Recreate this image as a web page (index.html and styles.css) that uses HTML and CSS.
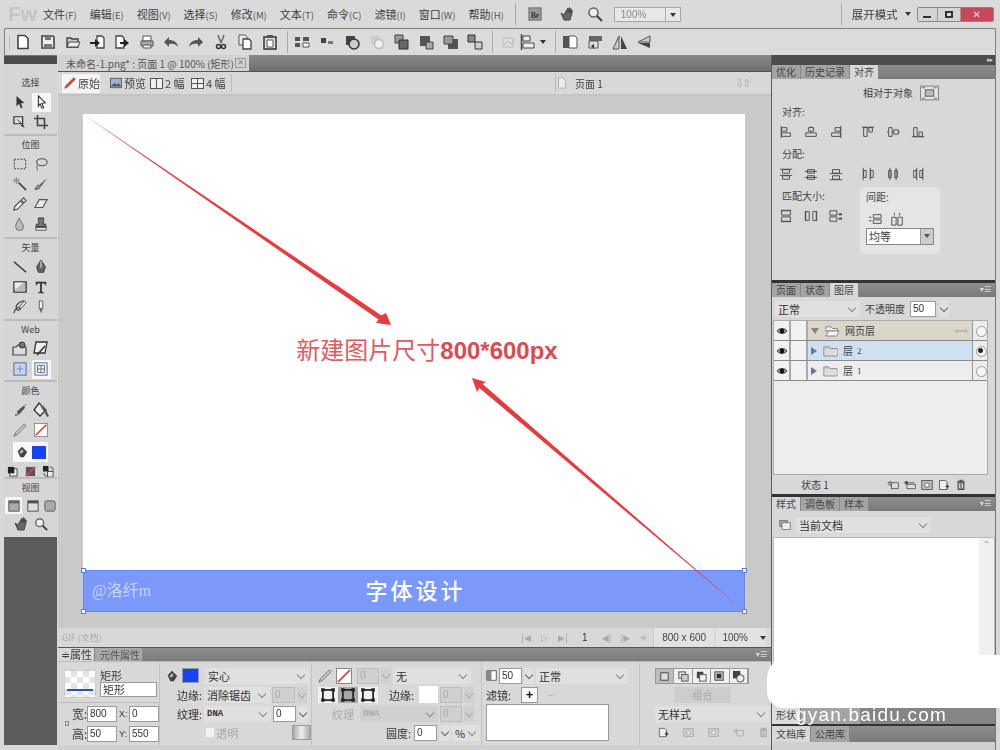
FILE: index.html
```html
<!DOCTYPE html>
<html lang="zh">
<head>
<meta charset="utf-8">
<title>Fireworks</title>
<link rel="stylesheet" href="styles.css">
</head>
<body>
<svg class="defs" width="0" height="0">
<defs>
<symbol id="new" viewBox="0 0 16 16"><path d="M3 1.500h7l3 3v10H3z" fill="#fff" stroke="#444" stroke-width="1.600"/></symbol>
<symbol id="save" viewBox="0 0 16 16"><path d="M2 2h11l1 1v11H2z" fill="#eee" stroke="#444" stroke-width="1.600"/><path d="M5 2h6v4H5zM4 10h8v4H4z" fill="#777"/></symbol>
<symbol id="open" viewBox="0 0 16 16"><path d="M2 4h4l1 1h6v8H2z" fill="#ccc" stroke="#444" stroke-width="1.400"/><path d="M2 13l2-5h11l-2 5z" fill="#eee" stroke="#444"/></symbol>
<symbol id="imp" viewBox="0 0 16 16"><path d="M8 2h5l2 2v10H8z" fill="#fff" stroke="#444" stroke-width="1.300"/><path d="M1 8h5V5l5 4-5 4v-3H1z" fill="#222"/></symbol>
<symbol id="exp" viewBox="0 0 16 16"><path d="M2 2h6l2 2v10H2z" fill="#fff" stroke="#444" stroke-width="1.300"/><path d="M6 8h4V5l5 4-5 4v-3H6z" fill="#222"/></symbol>
<symbol id="print" viewBox="0 0 16 16"><path d="M4 2h8v5H4z" fill="#fff" stroke="#555"/><path d="M2 7h12v5H2z" fill="#aaa" stroke="#555"/><path d="M4 11h8v3H4z" fill="#eee" stroke="#555"/></symbol>
<symbol id="undo" viewBox="0 0 16 16"><path d="M1 8l5-5v3c5 0 8 2 9 7-2-3-5-4-9-3v3z" fill="#555"/></symbol>
<symbol id="redo" viewBox="0 0 16 16"><path d="M15 8l-5-5v3C5 6 2 8 1 13c2-3 5-4 9-3v3z" fill="#555"/></symbol>
<symbol id="cut" viewBox="0 0 16 16"><path d="M5 1l3 8M11 1L8 9" stroke="#666" stroke-width="1.500" fill="none"/><circle cx="5.500" cy="12.500" r="2" fill="none" stroke="#333" stroke-width="1.500"/><circle cx="10.500" cy="12.500" r="2" fill="none" stroke="#333" stroke-width="1.500"/></symbol>
<symbol id="copy" viewBox="0 0 16 16"><path d="M2 1h6l2 2v8H2z" fill="#eee" stroke="#555"/><path d="M6 5h6l2 2v8H6z" fill="#fff" stroke="#444" stroke-width="1.300"/></symbol>
<symbol id="paste" viewBox="0 0 16 16"><path d="M2 3h12v12H2z" fill="#ddd" stroke="#333" stroke-width="1.500"/><path d="M5 1h6v3H5z" fill="#555"/><path d="M5 6h6v7H5z" fill="#fff" stroke="#555"/></symbol>
<symbol id="g1" viewBox="0 0 16 16"><path d="M1 3h5v4H1zM9 3h6v4H9zM1 9h5v4H1z" fill="#555"/><path d="M9 9h6v4H9z" fill="#fff" stroke="#555"/></symbol>
<symbol id="g2" viewBox="0 0 16 16"><path d="M2 4h5v5H2z" fill="#444"/><path d="M9 7h5v3H9z" fill="#777"/></symbol>
<symbol id="g3" viewBox="0 0 16 16"><path d="M2 2h9v9H2z" fill="#444"/><circle cx="10" cy="10" r="5" fill="#ccc" stroke="#333" stroke-width="1.500"/></symbol>
<symbol id="g4" viewBox="0 0 16 16"><path d="M2 2h8v8H2z" fill="#ccc"/><circle cx="10" cy="10" r="4.500" fill="#eee" stroke="#bbb" stroke-width="1.500"/></symbol>
<symbol id="g5" viewBox="0 0 16 16"><path d="M2 1h8v8H2z" fill="#999" stroke="#444"/><path d="M6 6h9v9H6z" fill="#666" stroke="#333"/></symbol>
<symbol id="g6" viewBox="0 0 16 16"><path d="M2 2h10v10H2z" fill="#555"/><path d="M8 8h7v7H8z" fill="#aaa" stroke="#444"/></symbol>
<symbol id="g7" viewBox="0 0 16 16"><path d="M5 5h10v10H5z" fill="#555"/><path d="M1 2h9v8H1z" fill="#999" stroke="#444"/></symbol>
<symbol id="g8" viewBox="0 0 16 16"><path d="M1 1h7v7H1z" fill="#888" stroke="#333"/><path d="M8 8h7v7H8z" fill="#ccc" stroke="#333"/></symbol>
<symbol id="g9" viewBox="0 0 16 16"><path d="M2 4h10v9H2z" fill="#ddd" stroke="#bbb"/><path d="M3 11l4-4 3 3 4-5" fill="none" stroke="#bbb"/></symbol>
<symbol id="alg" viewBox="0 0 16 16"><path d="M1.500 0v16" stroke="#444" stroke-width="1.500"/><path d="M3 2h7v5H3zM3 9h11v5H3z" fill="#eee" stroke="#444"/></symbol>
<symbol id="m1" viewBox="0 0 16 16"><path d="M1 2h6v12H1z" fill="#555"/><path d="M7 2h6l2 2v10H7z" fill="#fff" stroke="#555"/></symbol>
<symbol id="m2" viewBox="0 0 16 16"><path d="M2 2h13v5H2z" fill="#666"/><path d="M2 7h9v7H2z" fill="#ddd" stroke="#555"/><path d="M7 15l-3-3 3-2z" fill="#333"/></symbol>
<symbol id="m3" viewBox="0 0 16 16"><path d="M7 2v13H1z" fill="#ccc" stroke="#555"/><path d="M9 2v13h6z" fill="#444"/></symbol>
<symbol id="m4" viewBox="0 0 16 16"><path d="M14 2v6L2 8z" fill="#ccc" stroke="#555"/><path d="M14 14V9L2 9z" fill="#444"/></symbol>
<symbol id="br" viewBox="0 0 16 16"><rect x="1" y="1" width="14" height="14" fill="#999" stroke="#666"/><text x="3" y="12" font-size="9" font-weight="700" fill="#333" font-family="Liberation Serif">Br</text></symbol>
<symbol id="hand" viewBox="0 0 16 16"><path d="M3 7l3 7h6l2-7V4l-1 3V2.500l-1.500 4V1.500l-1.500 5V2L7 7 6 9z" fill="#666" stroke="#444"/></symbol>
<symbol id="mag" viewBox="0 0 16 16"><circle cx="6.500" cy="6.500" r="4.500" fill="#eee" stroke="#666" stroke-width="1.600"/><path d="M10 10l5 5" stroke="#444" stroke-width="2.200"/></symbol>
<symbol id="arrow" viewBox="0 0 16 16"><path d="M4 1l9 8-4 .5 2 5-2 .5-2-5-3 3z" fill="#333"/></symbol>
<symbol id="sub" viewBox="0 0 16 16"><path d="M5 1l8 8-4 .5 2 5-2 .5-2-5-2 3z" fill="#fff" stroke="#333" stroke-width="1.200"/></symbol>
<symbol id="scale" viewBox="0 0 16 16"><path d="M1 2h10v8H1z" fill="#ddd" stroke="#333" stroke-width="1.400"/><path d="M5 5l7 7h-3l4 2" fill="#444" stroke="#333"/></symbol>
<symbol id="crop" viewBox="0 0 16 16"><path d="M4 0v12h12M0 4h12v12" fill="none" stroke="#444" stroke-width="1.800"/></symbol>
<symbol id="marq" viewBox="0 0 16 16"><rect x="1.500" y="2.500" width="13" height="11" fill="none" stroke="#444" stroke-width="1.200" stroke-dasharray="2 1.500"/></symbol>
<symbol id="lasso" viewBox="0 0 16 16"><ellipse cx="9" cy="6" rx="6" ry="4" fill="none" stroke="#555" stroke-width="1.300"/><path d="M4 9c-2 2 0 4 0 6" fill="none" stroke="#555"/></symbol>
<symbol id="wand" viewBox="0 0 16 16"><path d="M6 6l9 9" stroke="#444" stroke-width="2"/><path d="M4 0v8M0 4h8M1 1l6 6M7 1L1 7" stroke="#888"/></symbol>
<symbol id="brush" viewBox="0 0 16 16"><path d="M15 1L6 9l2 2z" fill="#666"/><path d="M5 9c-2 1-2 3-4 5 4 0 6-1 6-3z" fill="#999" stroke="#444"/></symbol>
<symbol id="pencil" viewBox="0 0 16 16"><path d="M12 1l3 3L5 14l-4 1 1-4z" fill="#eee" stroke="#444" stroke-width="1.200"/><path d="M10 3l3 3-2 2-3-3z" fill="#666"/></symbol>
<symbol id="eraser" viewBox="0 0 16 16"><path d="M6 3h9l-5 9H1z" fill="#e8e8e8" stroke="#555" stroke-width="1.200"/></symbol>
<symbol id="drop" viewBox="0 0 16 16"><path d="M7 1C5 6 3 8 3 11a4.500 4.500 0 0 0 9 0c0-3-3-5-5-10z" fill="#bbb" stroke="#666"/></symbol>
<symbol id="stamp" viewBox="0 0 16 16"><path d="M5 1h6v4l-1 3h3l1 3H2l1-3h3L5 5z" fill="#777" stroke="#333"/><path d="M2 12h12v3H2z" fill="#eee" stroke="#444"/></symbol>
<symbol id="line" viewBox="0 0 16 16"><path d="M1 2l14 12" stroke="#333" stroke-width="1.600"/></symbol>
<symbol id="pen" viewBox="0 0 16 16"><path d="M8 0l5 8-2 6H5L3 8z" fill="#666" stroke="#333"/><path d="M8 1v8" stroke="#fff"/></symbol>
<symbol id="rect" viewBox="0 0 16 16"><path d="M1 2h14v12H1z" fill="#bbb" stroke="#333" stroke-width="1.400"/><path d="M2 3h10l-10 8z" fill="#eee"/></symbol>
<symbol id="tee" viewBox="0 0 16 16"><path d="M2 2h12v4h-1l-1-2H9v9l2 1v1H5v-1l2-1V4H4L3 6H2z" fill="#333"/></symbol>
<symbol id="free" viewBox="0 0 16 16"><path d="M13 1c-5 0-11 5-9 9 1 3 6 1 4-1-2-2-6 1-7 6" fill="none" stroke="#444" stroke-width="1.300"/><path d="M15 3l-5 6-3 1 1-3 5-6z" fill="#eee" stroke="#444"/></symbol>
<symbol id="knife" viewBox="0 0 16 16"><path d="M6 1h4v9H6z" fill="#eee" stroke="#555"/><path d="M6 10h4l-2 5z" fill="#666"/></symbol>
<symbol id="hot" viewBox="0 0 16 16"><path d="M1 6h3l2-2h4l1 2h3v8H1z" fill="#ddd" stroke="#444" stroke-width="1.200"/><circle cx="10" cy="4" r="3" fill="#777" stroke="#333"/></symbol>
<symbol id="slice" viewBox="0 0 16 16"><path d="M3 1h11l-2 11H1z" fill="#eee" stroke="#333" stroke-width="1.300"/><path d="M12 5l-8 9" stroke="#333" stroke-width="1.500"/></symbol>
<symbol id="hide" viewBox="0 0 16 16"><rect x="1" y="1" width="14" height="14" fill="#c8d4ea" stroke="#6f86b5" stroke-width="1.500"/><path d="M8 4v8M4 8h8" stroke="#6f86b5"/></symbol>
<symbol id="show" viewBox="0 0 16 16"><rect x="1" y="1" width="14" height="14" fill="#f2f4fa" stroke="#7a8fc0" stroke-width="1.500"/><path d="M4 4h8v8H4zM8 4v8M4 8h8" fill="none" stroke="#666"/></symbol>
<symbol id="eye" viewBox="0 0 16 16"><path d="M14 1l1 1-2 2 1 1-6 7-3 2-3 1 1-3 2-3 7-6 1 1z" fill="#555"/><path d="M4 10l-2 4 4-2z" fill="#ccc"/></symbol>
<symbol id="bucket" viewBox="0 0 16 16"><path d="M6 1l7 7-6 6-6-6z" fill="#eee" stroke="#333" stroke-width="1.300"/><path d="M7 4l6 4 3 6-2 1-2-4z" fill="#555"/></symbol>
<symbol id="strk" viewBox="0 0 16 16"><path d="M13 1l2 2L5 13l-4 2 2-4z" fill="#ccc" stroke="#666"/></symbol>
<symbol id="redp" viewBox="0 0 16 16"><path d="M13 1l2 2L5 13l-4 2 2-4z" fill="#d8414a" stroke="#a83038"/></symbol>
<symbol id="prev" viewBox="0 0 14 12"><rect x=".5" y=".5" width="13" height="11" fill="#9fb2cc" stroke="#555"/><path d="M1 10l4-4 3 2 2-2 3 4z" fill="#556"/></symbol>
<symbol id="fillp" viewBox="0 0 16 16"><path d="M3 7l5-5 6 6-4 6H6z" fill="#444"/><path d="M5 8l3-3 2 2-3 3z" fill="#bbb"/></symbol>
<symbol id="noneswatch" viewBox="0 0 16 16"><rect x=".5" y=".5" width="15" height="15" fill="#fff" stroke="#888"/><path d="M2 14L14 2" stroke="#d83030" stroke-width="1.600"/></symbol>
<symbol id="defc" viewBox="0 0 12 12"><rect x="3" y="3" width="8" height="8" fill="#eee" stroke="#444"/><rect x="1" y="1" width="7" height="7" fill="#222"/></symbol>
<symbol id="nocol" viewBox="0 0 12 12"><rect x="1" y="1" width="10" height="10" fill="#555"/><path d="M1 11L11 1" stroke="#e04040" stroke-width="2"/></symbol>
<symbol id="swp" viewBox="0 0 12 12"><rect x="0" y="0" width="6" height="6" fill="#222"/><rect x="5" y="6" width="6" height="6" fill="#eee" stroke="#444"/><path d="M8 1c3 0 3 3 3 4M1 8c0 2 1 3 3 3" fill="none" stroke="#333"/></symbol>
<symbol id="v1" viewBox="0 0 14 14"><rect x="1" y="1" width="12" height="12" fill="#aaa" stroke="#444"/><rect x="1" y="1" width="12" height="3" fill="#666"/></symbol>
<symbol id="v2" viewBox="0 0 14 14"><rect x="1" y="1" width="12" height="12" fill="#ddd" stroke="#444"/><rect x="1" y="1" width="12" height="3" fill="#555"/></symbol>
<symbol id="v3" viewBox="0 0 14 14"><rect x="1" y="1" width="12" height="12" rx="2" fill="#aaa" stroke="#555"/></symbol>
<symbol id="a1" viewBox="0 0 16 16"><path d="M2.500 1v14" stroke="#444"/><path d="M3 3h6v4H3zM3 9h10v4H3z" fill="none" stroke="#444"/></symbol>
<symbol id="a2" viewBox="0 0 16 16"><path d="M5 3h6v4H5zM2 9h12v4H2z" fill="none" stroke="#444"/><path d="M8 1v2M8 7v2" stroke="#444"/></symbol>
<symbol id="a3" viewBox="0 0 16 16"><path d="M13.500 1v14" stroke="#444"/><path d="M7 3h6v4H7zM3 9h10v4H3z" fill="none" stroke="#444"/></symbol>
<symbol id="a4" viewBox="0 0 16 16"><path d="M1 2.500h14" stroke="#444"/><path d="M3 3h4v10H3zM9 3h4v5H9z" fill="none" stroke="#444"/></symbol>
<symbol id="a5" viewBox="0 0 16 16"><path d="M1 8h2M7 8h2M14 8h2" stroke="#444"/><path d="M3 3h4v10H3zM9 5.500h5v5H9z" fill="none" stroke="#444"/></symbol>
<symbol id="a6" viewBox="0 0 16 16"><path d="M1 13.500h14" stroke="#444"/><path d="M3 3h4v10H3zM9 8h4v5H9z" fill="none" stroke="#444"/></symbol>
<symbol id="d1" viewBox="0 0 16 16"><path d="M1 2.500h14M1 9.500h14" stroke="#444"/><path d="M4 3h8v4H4zM4 10h8v4H4z" fill="none" stroke="#444"/></symbol>
<symbol id="d2" viewBox="0 0 16 16"><path d="M1 5h14M1 12h14" stroke="#444"/><path d="M4 3h8v4H4zM4 10h8v4H4z" fill="none" stroke="#444"/></symbol>
<symbol id="d3" viewBox="0 0 16 16"><path d="M1 7.500h14M1 14.500h14" stroke="#444"/><path d="M4 3h8v4H4zM4 10h8v4H4z" fill="none" stroke="#444"/></symbol>
<symbol id="d4" viewBox="0 0 16 16"><path d="M2.500 1v14M10.500 1v14" stroke="#444"/><path d="M3 4h3v8H3zM11 4h3v8h-3z" fill="none" stroke="#444"/></symbol>
<symbol id="d5" viewBox="0 0 16 16"><path d="M4.500 1v14M11.500 1v14" stroke="#444"/><path d="M3 4h3v8H3zM10 4h3v8h-3z" fill="none" stroke="#444"/></symbol>
<symbol id="d6" viewBox="0 0 16 16"><path d="M6.500 1v14M13.500 1v14" stroke="#444"/><path d="M3 4h3v8H3zM10 4h3v8h-3z" fill="none" stroke="#444"/></symbol>
<symbol id="s1" viewBox="0 0 16 16"><path d="M2 1.500h12M2 14.500h12" stroke="#444"/><path d="M3 2h10v5H3zM3 9h10v5H3z" fill="none" stroke="#444"/></symbol>
<symbol id="s2" viewBox="0 0 16 16"><path d="M1.500 2v12M14.500 2v12" stroke="#444"/><path d="M2 3h4v10H2zM10 3h4v10h-4z" fill="none" stroke="#444"/></symbol>
<symbol id="s3" viewBox="0 0 16 16"><path d="M1 2h8v5H1zM1 9h8v5H1z" fill="none" stroke="#444"/><path d="M11 5h4v2h-4zM11 10h4v2h-4z" fill="#444"/></symbol>
<symbol id="sp1" viewBox="0 0 16 16"><path d="M1 6h3M1 10h3" stroke="#444"/><path d="M6 3h9v4H6zM6 9h9v4H6z" fill="none" stroke="#444"/></symbol>
<symbol id="sp2" viewBox="0 0 16 16"><path d="M5 1v3M11 1v3" stroke="#444"/><path d="M2 6h5v9H2zM9 6h5v9H9z" fill="none" stroke="#444"/></symbol>
<symbol id="rel" viewBox="0 0 18 14"><rect x=".5" y=".5" width="17" height="13" fill="#e4e4e4" stroke="#888"/><rect x="5" y="4" width="8" height="6" fill="#bbb" stroke="#666"/><path d="M2 2h3M13 2h3M2 12h3M13 12h3" stroke="#777"/></symbol>
<symbol id="page" viewBox="0 0 12 14"><path d="M2 1h5l3 3v9H2z" fill="#eee" stroke="#aaa"/></symbol>
<symbol id="folder" viewBox="0 0 18 14"><path d="M1 2h6l2 2h8v9H1z" fill="#ccc" stroke="#888"/><path d="M2 5h15v7H2z" fill="#ddd"/></symbol>
<symbol id="folderopen" viewBox="0 0 18 14"><path d="M1 2h6l2 2h6v3H1z" fill="#eee" stroke="#777"/><path d="M1 13l3-6h13l-3 6z" fill="#f2f2f2" stroke="#777"/></symbol>
<symbol id="eyeball" viewBox="0 0 14 12"><path d="M1 6c3-4 9-4 12 0-3 4-9 4-12 0z" fill="#aaa" stroke="#222"/><circle cx="7" cy="6" r="2.800" fill="#111"/></symbol>
<symbol id="lay1" viewBox="0 0 16 14"><path d="M2 4h3V2L1 5l4 3V6h4" fill="none" stroke="#444"/><rect x="6" y="4" width="9" height="8" fill="#ddd" stroke="#444"/></symbol>
<symbol id="lay2" viewBox="0 0 16 14"><path d="M14 4H4" stroke="#444"/><rect x="1" y="2" width="4" height="4" fill="#444"/><rect x="4" y="6" width="11" height="6" fill="#ddd" stroke="#444"/></symbol>
<symbol id="lay3" viewBox="0 0 16 14"><rect x="1" y="1" width="14" height="12" fill="#bbb" stroke="#444"/><circle cx="8" cy="7" r="3" fill="#fff" stroke="#444"/></symbol>
<symbol id="lay4" viewBox="0 0 16 14"><path d="M2 1h8l2 2v10H2z" fill="#eee" stroke="#444"/><path d="M10 9h5M12.500 6v6" stroke="#333" stroke-width="1.500"/></symbol>
<symbol id="lay5" viewBox="0 0 16 14"><path d="M4 3h8v10H4zM3 2h10" fill="#888" stroke="#333"/><path d="M6 0h4v2H6z" fill="#555"/><path d="M6 5v6M10 5v6" stroke="#eee"/></symbol>
<symbol id="styledoc" viewBox="0 0 16 14"><rect x="1" y="1" width="10" height="8" fill="#aaa" stroke="#666"/><rect x="4" y="4" width="11" height="9" fill="#eee" stroke="#666"/></symbol>
<symbol id="thumb" viewBox="0 0 14 14"><rect x="1" y="1" width="12" height="12" fill="#fff" stroke="#444"/><rect x="1" y="1" width="6" height="12" fill="#888"/></symbol>
<symbol id="b1" viewBox="0 0 14 14"><rect x="3" y="3" width="8" height="8" fill="#ddd" stroke="#444"/></symbol>
<symbol id="b2" viewBox="0 0 14 14"><rect x="2" y="2" width="7" height="7" fill="#ddd" stroke="#555"/><rect x="5" y="5" width="7" height="7" fill="#ccc" stroke="#555"/></symbol>
<symbol id="b3" viewBox="0 0 14 14"><path d="M2 2h7v3H5v4H2z" fill="#444"/><rect x="5" y="5" width="7" height="7" fill="#eee" stroke="#555"/></symbol>
<symbol id="b4" viewBox="0 0 14 14"><rect x="2" y="2" width="9" height="9" fill="#ccc" stroke="#444"/><rect x="4" y="4" width="5" height="5" fill="#333"/></symbol>
<symbol id="b5" viewBox="0 0 14 14"><rect x="1" y="1" width="8" height="8" fill="#444"/><circle cx="9" cy="9" r="4" fill="#eee" stroke="#444"/></symbol>
<symbol id="sq3" viewBox="0 0 14 14"><rect x="2.500" y="2.500" width="9" height="9" fill="none" stroke="#222" stroke-width="1.500"/><path d="M1 1h3v3H1zM10 1h3v3h-3zM1 10h3v3H1zM10 10h3v3h-3z" fill="#222"/></symbol>
</defs>
</svg>

<div class="app">
  <header class="titlebar">
    <span class="logo">Fw</span>
    <nav class="menu">
      <span>文件<small>(F)</small></span><span>编辑<small>(E)</small></span><span>视图<small>(V)</small></span><span>选择<small>(S)</small></span><span>修改<small>(M)</small></span><span>文本<small>(T)</small></span><span>命令<small>(C)</small></span><span>滤镜<small>(I)</small></span><span>窗口<small>(W)</small></span><span>帮助<small>(H)</small></span>
    </nav>
    <i class="vsep sep-menu"></i>
    <svg class="ic14 br"><use href="#br"/></svg>
    <svg class="ic16 hand"><use href="#hand"/></svg>
    <svg class="ic16 mag"><use href="#mag"/></svg>
    <span class="zoomsel"><span>100%</span><b></b></span>
    <i class="vsep sep-mode"></i>
    <span class="mode">展开模式</span>
    <span class="tri"></span>
    <span class="winbtns"><span class="wb wmin"><i></i></span><span class="wb wmax"><i></i></span><span class="wb wclose">✕</span></span>
  </header>

  <div class="toolbar">
    <span class="grip"></span>
    <svg class="ic16"><use href="#new"/></svg><svg class="ic16"><use href="#save"/></svg><svg class="ic16"><use href="#open"/></svg><svg class="ic16"><use href="#imp"/></svg><svg class="ic16"><use href="#exp"/></svg><svg class="ic16"><use href="#print"/></svg><svg class="ic16"><use href="#undo"/></svg><svg class="ic16"><use href="#redo"/></svg><svg class="ic16"><use href="#cut"/></svg><svg class="ic16"><use href="#copy"/></svg><svg class="ic16"><use href="#paste"/></svg>
    <i class="tsep"></i>
    <svg class="ic16"><use href="#g1"/></svg><svg class="ic16"><use href="#g2"/></svg><svg class="ic16"><use href="#g3"/></svg><svg class="ic16"><use href="#g4"/></svg><svg class="ic16"><use href="#g5"/></svg><svg class="ic16"><use href="#g6"/></svg><svg class="ic16"><use href="#g7"/></svg><svg class="ic16"><use href="#g8"/></svg>
    <i class="tsep"></i>
    <svg class="ic16 g9"><use href="#g9"/></svg><svg class="ic16 tight"><use href="#alg"/></svg><span class="tri tri-small"></span>
    <i class="tsep"></i>
    <svg class="ic16"><use href="#m1"/></svg><svg class="ic16"><use href="#m2"/></svg><svg class="ic16"><use href="#m3"/></svg><svg class="ic16"><use href="#m4"/></svg>
  </div>

  <div class="workspace">
    <aside class="toolcol">
      <div class="darkstrip"></div>
      <div class="tools">
        <section class="tsec h1"><h4>选择</h4><div class="tgrid">
          <svg class="ic14"><use href="#arrow"/></svg><span class="tcell on"><svg class="ic14"><use href="#sub"/></svg></span>
          <svg class="ic14"><use href="#scale"/></svg><svg class="ic14"><use href="#crop"/></svg>
        </div></section>
        <section class="tsec h2"><h4>位图</h4><div class="tgrid">
          <svg class="ic14"><use href="#marq"/></svg><svg class="ic14"><use href="#lasso"/></svg>
          <svg class="ic14"><use href="#wand"/></svg><svg class="ic14"><use href="#brush"/></svg>
          <svg class="ic14"><use href="#pencil"/></svg><svg class="ic14"><use href="#eraser"/></svg>
          <svg class="ic14"><use href="#drop"/></svg><svg class="ic14"><use href="#stamp"/></svg>
        </div></section>
        <section class="tsec h3"><h4>矢量</h4><div class="tgrid">
          <svg class="ic14"><use href="#line"/></svg><svg class="ic14"><use href="#pen"/></svg>
          <svg class="ic14"><use href="#rect"/></svg><svg class="ic14"><use href="#tee"/></svg>
          <svg class="ic14"><use href="#free"/></svg><svg class="ic14"><use href="#knife"/></svg>
        </div></section>
        <section class="tsec h4"><h4>Web</h4><div class="tgrid">
          <svg class="ic16"><use href="#hot"/></svg><svg class="ic16"><use href="#slice"/></svg>
          <svg class="ic14"><use href="#hide"/></svg><span class="tcell on"><svg class="ic14"><use href="#show"/></svg></span>
        </div></section>
        <section class="tsec h5"><h4>颜色</h4><div class="tgrid">
          <svg class="ic14"><use href="#eye"/></svg><svg class="ic16"><use href="#bucket"/></svg>
          <svg class="ic14"><use href="#strk"/></svg><svg class="ic14"><use href="#noneswatch"/></svg>
        </div>
        <div class="fillrow"><svg class="ic14"><use href="#fillp"/></svg><span class="blue"></span></div>
        <div class="colrow"><svg class="ic10"><use href="#defc"/></svg><svg class="ic10"><use href="#nocol"/></svg><svg class="ic10"><use href="#swp"/></svg></div>
        </section>
        <section class="tsec h6"><h4>视图</h4>
        <div class="viewrow"><span class="tcell on small"><svg class="ic12"><use href="#v1"/></svg></span><svg class="ic12"><use href="#v2"/></svg><svg class="ic12"><use href="#v3"/></svg></div>
        <div class="tgrid gridlow"><svg class="ic16"><use href="#hand"/></svg><svg class="ic14"><use href="#mag"/></svg></div>
        </section>
      </div>
    </aside>

    <main class="center">
      <div class="tabbar"><div class="doctab"><span>未命名-1.png* : 页面 1 @ 100% (矩形)</span><span class="x">✕</span></div></div>
      <div class="subbar">
        <span class="vb vb1 active"><svg class="ic12"><use href="#redp"/></svg>原始</span>
        <span class="vb vb2"><svg class="ic12"><use href="#prev"/></svg>预览</span>
        <span class="vb vb3"><span class="pane two"></span>2 幅</span>
        <span class="vb vb4"><span class="pane four"></span>4 幅</span>
        <i class="subsep s1"></i>
        <i class="subsep s2"></i>
        <svg class="ic12 pageic"><use href="#page"/></svg><span class="pagename">页面 1</span>
        <span class="subright">⇩⇧</span>
      </div>
      <div class="canvasarea">
        <div class="artboard">
          <div class="white"><div class="headline">新建图片尺寸<b>800*600px</b></div></div>
          <div class="band">
            <span class="sig">@洛纤m</span>
            <span class="bandtitle">字体设计</span>
            <i class="hd tl"></i><i class="hd tr"></i><i class="hd bl"></i><i class="hd br2"></i>
          </div>
          <svg class="arrows" viewBox="83 114 662 498">
            <polygon points="83,114 381.400,315.400 386,313 391,325 376,323 378.600,319.600" fill="#e63c40"/>
            <polygon points="745,612 482.600,384.100 486,382 472,378 477,392 479.400,387.900" fill="#e63c40"/>
          </svg>
        </div>
      </div>
      <div class="statusbar">
        <span class="gif">GIF (文档)</span>
        <span class="play"><span>|◀</span><span>▷</span><span>▶|</span><em>1</em><span>◀|</span><span>|▶</span><span>✳</span></span>
        <span class="dim">800 x 600</span>
        <span class="zoompct">100%<i class="tri tri-small"></i></span>
      </div>
      <div class="proptabs"><span class="ptab on">≑属性</span><span class="ptab">元件属性</span><span class="menuic">▾☰</span></div>
      <div class="props">
        <div class="p-a">
          <div class="p-a-top">
            <span class="thumb"><i></i></span>
            <div class="namecol"><span>矩形</span><span class="inp w57">矩形</span></div>
          </div>
          <div class="sizegrid">
            <i class="link"></i>
            <div class="sizerows">
              <div class="srow"><label class="big">宽:</label><span class="inp w30">800</span><label>X:</label><span class="inp w30">0</span></div>
              <div class="srow"><label class="big">高:</label><span class="inp w30">50</span><label>Y:</label><span class="inp w30">550</span></div>
            </div>
          </div>
        </div>
        <div class="p-b">
          <div class="prow"><svg class="ic14 mr3"><use href="#fillp"/></svg><span class="swatch blue2"></span><span class="sel w104">实心</span></div>
          <div class="prow"><label class="lab l43">边缘:</label><span class="sel w66">消除锯齿</span><span class="inp off w23">0</span><span class="sp"></span></div>
          <div class="prow"><label class="lab l43">纹理:</label><span class="sel w67 mono">DNA</span><span class="inp w23">0</span><span class="sp on"></span></div>
          <div class="prow"><span class="chk"></span><span class="dim-t">透明</span><span class="gbtn"></span></div>
        </div>
        <div class="p-c">
          <div class="prow"><svg class="ic14 mr6"><use href="#strk"/></svg><svg class="swatch2"><use href="#noneswatch"/></svg><span class="inp off w22">0</span><span class="sp"></span><span class="sel w78">无</span></div>
          <div class="prow"><span class="tri3"><svg><use href="#sq3"/></svg><svg class="sel3"><use href="#sq3"/></svg><svg><use href="#sq3"/></svg></span><label class="lab edge">边缘:</label><span class="whitebox"></span><span class="inp off w22">0</span><span class="sp"></span></div>
          <div class="prow"><label class="dim-t lab2">纹理</label><span class="sel off w78 mono">DNA</span><span class="inp off w22">0</span><span class="sp"></span></div>
          <div class="prow endrow"><label class="lab">圆度:</label><span class="inp w23">0</span><span class="sp on"></span><span class="sel w28">%</span></div>
        </div>
        <div class="p-d">
          <div class="prow"><svg class="ic10 mr2"><use href="#thumb"/></svg><span class="inp w23">50</span><span class="sp on"></span><span class="sel w92">正常</span></div>
          <div class="prow rowf"><label class="lab">滤镜:</label><span class="plus">+</span><span class="minus">−</span></div>
          <div class="filterlist"></div>
        </div>
        <div class="p-e">
          <div class="bgroup"><span class="on"><svg><use href="#b1"/></svg></span><span><svg><use href="#b2"/></svg></span><span><svg><use href="#b3"/></svg></span><span><svg><use href="#b4"/></svg></span><span><svg><use href="#b5"/></svg></span></div>
          <span class="groupbtn">组合</span>
          <span class="sel w114">无样式</span>
          <div class="styleicons"><svg class="ic10"><use href="#lay4"/></svg><svg class="ic10 faint"><use href="#lay3"/></svg><svg class="ic10 faint"><use href="#lay3"/></svg><svg class="ic10 faint"><use href="#lay1"/></svg><svg class="ic10 faint"><use href="#lay5"/></svg></div>
        </div>
      </div>
    </main>

    <aside class="side">
      <div class="sidehead">▸▸</div>
      <div class="ptabs"><span>优化</span><span>历史记录</span><span class="on">对齐</span></div>
      <div class="alignp">
        <div class="relrow"><span>相对于对象</span><svg class="relic"><use href="#rel"/></svg></div>
        <div class="alab">对齐:</div>
        <div class="airow"><svg class="ic14"><use href="#a1"/></svg><svg class="ic14"><use href="#a2"/></svg><svg class="ic14"><use href="#a3"/></svg><i></i><svg class="ic14"><use href="#a4"/></svg><svg class="ic14"><use href="#a5"/></svg><svg class="ic14"><use href="#a6"/></svg></div>
        <div class="alab">分配:</div>
        <div class="airow"><svg class="ic14"><use href="#d1"/></svg><svg class="ic14"><use href="#d2"/></svg><svg class="ic14"><use href="#d3"/></svg><i></i><svg class="ic14"><use href="#d4"/></svg><svg class="ic14"><use href="#d5"/></svg><svg class="ic14"><use href="#d6"/></svg></div>
        <div class="alower">
          <div class="amatch"><div class="alab">匹配大小:</div><div class="airow"><svg class="ic14"><use href="#s1"/></svg><svg class="ic14"><use href="#s2"/></svg><svg class="ic14"><use href="#s3"/></svg></div></div>
          <div class="aspace"><div class="alab">间距:</div><div class="spic"><svg class="ic14"><use href="#sp1"/></svg><svg class="ic14"><use href="#sp2"/></svg></div><span class="eqsel"><span>均等</span><b></b></span></div>
        </div>
      </div>
      <div class="darkline"></div>
      <div class="ptabs"><span>页面</span><span>状态</span><span class="on">图层</span><em class="menuic">▾☰</em></div>
      <div class="layersp">
        <div class="lhead"><span class="sel w85">正常</span><span class="lopac">不透明度</span><span class="inp w26">50</span><span class="sp on"></span></div>
        <div class="llist">
          <div class="lrow webl"><span class="lc eyec"><svg><use href="#eyeball"/></svg></span><span class="lc blank"></span><span class="lname"><i class="ltri down"></i><svg class="fold"><use href="#folderopen"/></svg>网页层</span><span class="lmove">⟺</span><span class="radio"></span></div>
          <div class="lrow sel2"><span class="lc eyec"><svg><use href="#eyeball"/></svg></span><span class="lc blank"></span><span class="lname"><i class="ltri"></i><svg class="fold"><use href="#folder"/></svg>层 <small>2</small></span><span class="radio on"></span></div>
          <div class="lrow"><span class="lc eyec"><svg><use href="#eyeball"/></svg></span><span class="lc blank"></span><span class="lname"><i class="ltri"></i><svg class="fold"><use href="#folder"/></svg>层 <small>1</small></span><span class="radio"></span></div>
        </div>
        <div class="lfoot"><span>状态 1</span><div class="lfic"><svg class="ic12"><use href="#lay1"/></svg><svg class="ic12"><use href="#lay2"/></svg><svg class="ic12"><use href="#lay3"/></svg><svg class="ic12"><use href="#lay4"/></svg><svg class="ic12"><use href="#lay5"/></svg></div></div>
      </div>
      <div class="darkline"></div>
      <div class="ptabs"><span class="on">样式</span><span>调色板</span><span>样本</span><em class="menuic">▾☰</em></div>
      <div class="stylesp">
        <div class="shead"><svg class="ic12"><use href="#styledoc"/></svg><span class="sel w135">当前文档</span></div>
        <div class="slist"><span class="sbar">⌃</span></div>
      </div>
      <div class="ptabs low"><span class="on">形状</span><span class="blanktab"></span></div>
      <div class="darkline thin"></div>
      <div class="ptabs low2"><span class="on">文档库</span><span>公用库</span></div>
      <div class="sidefoot"></div>
    </aside>
  </div>
  <div class="wm-blob"></div>
  <div class="wm-text">gyan.baidu.com</div>
</div>
</body>
</html>
```

FILE: styles.css
```css
* { box-sizing: border-box; margin: 0; padding: 0; }
html, body { width: 1000px; height: 750px; overflow: hidden; background: #d8d8d8; }
body { font-family: "Noto Sans CJK SC", "Liberation Sans", sans-serif; font-size: 11px; color: #3c3c3c; }
.defs { position: absolute; }
i, em { font-style: normal; }
svg { display: block; flex: none; }
.ic16 { width: 16px; height: 16px; }
.ic14 { width: 14px; height: 14px; }
.ic12 { width: 12px; height: 12px; }
.ic10 { width: 11px; height: 11px; }

.app { position: relative; width: 1000px; height: 750px; display: flex; flex-direction: column; filter: blur(.6px); overflow: hidden; }

/* title */
.titlebar { height: 28px; display: flex; align-items: center; background: #dadada; padding-left: 8px; flex: none; }
.logo { font: 700 21px/28px "Liberation Sans", sans-serif; color: #c4c4c4; width: 35px; }
.menu { display: flex; gap: 13px; white-space: nowrap; color: #3c3c3c; font-size: 11px; }
.menu small { font-size: 9.5px; color: #555; }
.vsep { width: 1px; height: 22px; background: #aaa; flex: none; }
.sep-menu { margin-left: 11px; }
.br { margin-left: 12px; }
.hand { margin-left: 16px; }
.mag { margin-left: 13px; }
.zoomsel { margin-left: 11px; width: 67px; height: 15px; display: flex; background: #e8e8e8; border: 1px solid #a5a5a5; font: 10px/13px "Liberation Sans", sans-serif; color: #888; }
.zoomsel span { flex: 1; padding-left: 6px; border-right: 1px solid #aaa; }
.zoomsel b { width: 14px; position: relative; }
.zoomsel b::after { content: ""; position: absolute; left: 4px; top: 5px; border: 3px solid transparent; border-top: 4px solid #333; border-bottom: 0; }
.sep-mode { margin-left: 160px; }
.mode { margin-left: 10px; width: 53px; white-space: nowrap; font-size: 11.5px; }
.tri { width: 0; height: 0; border: 3px solid transparent; border-top: 4px solid #333; border-bottom: 0; flex: none; display: block; }
.winbtns { margin-left: 6px; display: flex; height: 15px; border: 1px solid #888; border-radius: 2px; width: 77px; }
.wb { display: flex; align-items: center; justify-content: center; background: #d4d4d4; }
.wmin { width: 20px; border-right: 1px solid #999; }
.wmin i { width: 8px; height: 2px; background: #333; margin-top: 6px; }
.wmax { width: 23px; border-right: 1px solid #999; }
.wmax i { width: 8px; height: 7px; border: 2px solid #333; background: #ddd; }
.wclose { flex: 1; background: #c9475a; color: #f4e0e4; font-size: 10px; font-weight: 700; font-family: "DejaVu Sans", sans-serif; }

/* toolbar */
.toolbar { height: 27px; flex: none; margin: 0 4px; background: #dbdbdb; border: 1px solid #808080; border-bottom: 0; border-radius: 2px 2px 0 0; display: flex; align-items: center; gap: 8.7px; padding-left: 4px; }
.grip { width: 1px; height: 15px; background: #bbb; margin-right: -3.500px; }
.tsep { width: 1px; height: 22px; background: #aaa; flex: none; margin-right: -2px; }
.g9 { margin-left: 1px; }
.tight { margin-right: -5px; margin-left: -5px; }

/* workspace */
.workspace { flex: 1; display: flex; min-height: 0; }
.toolcol { width: 58px; flex: none; padding-left: 4px; padding-right: 1px; background: #d8d8d8; display: flex; flex-direction: column; }
.darkstrip { height: 9px; background: #4c4c4c; border-top: 1px solid #777; }
.tools { height: 473px; background: #d6d6d6; }
.toolcol::after { content: ""; flex: 1; background: #5c5c5c; margin-bottom: 5px; }
.tsec { border-bottom: 2px solid #bcbcbc; }
.tsec h4 { font-size: 9px; font-weight: 400; line-height: 16px; text-align: center; color: #444; }
.h1 { height: 72px; padding-top: 11px; }
.h2 { height: 103px; padding-top: 1px; }
.h3 { height: 82px; padding-top: 1px; }
.h4 { height: 61px; padding-top: 1px; }
.h5 { height: 97px; padding-top: 1px; }
.h6 { height: 58px; padding-top: 1px; border-bottom: 0; }
.tgrid { display: grid; grid-template-columns: 21px 21px; grid-auto-rows: 20px; justify-content: center; justify-items: center; align-items: center; margin-top: 1px; }
.tcell { width: 19px; height: 19px; display: flex; align-items: center; justify-content: center; }
.tcell.on { background: #f6f6f6; }
.tcell.small { width: 17px; height: 17px; }
.fillrow { margin: 2px 0 0 9px; width: 35px; height: 20px; background: #f8f8f8; display: flex; align-items: center; justify-content: space-between; padding: 0 2px; }
.fillrow .blue { width: 14px; height: 13px; background: #1544f0; }
.colrow { display: flex; justify-content: center; gap: 7px; margin-top: 4px; }
.viewrow { display: flex; justify-content: center; gap: 5px; align-items: center; margin-top: 1px; height: 17px; }
.gridlow { margin-top: 0; grid-auto-rows: 19px; }

/* center */
.center { width: 713px; flex: none; display: flex; flex-direction: column; min-width: 0; }
.tabbar { height: 17px; flex: none; background: linear-gradient(#8a8a8a, #6e6e6e); border-bottom: 1px solid #555; }
.doctab { width: 191px; height: 16px; background: #d2d2d2; display: flex; align-items: center; padding-left: 8px; color: #555; white-space: nowrap; }
.doctab > span:first-child { width: 169px; font-size: 10px; }
.x { width: 11px; height: 10px; border: 1px solid #999; font: 8px/8px "DejaVu Sans", sans-serif; text-align: center; color: #888; }
.subbar { height: 24px; flex: none; display: flex; align-items: center; background: #d8d8d8; border-bottom: 2px solid #c4c4c4; padding-left: 4px; font-size: 11px; color: #444; }
.vb { display: flex; align-items: center; gap: 2px; height: 19px; padding: 0 2px; white-space: nowrap; flex: none; }
.vb1 { width: 38px; margin-right: 8px; background: #f4f4f4; }
.vb2 { width: 34px; margin-right: 6px; }
.vb3 { width: 36px; margin-right: 5px; }
.vb4 { width: 36px; margin-right: 6px; }
.pane { width: 13px; height: 11px; border: 1px solid #555; background: #f0f0f0; flex: none; }
.pane.two { background: linear-gradient(90deg, #f0f0f0 45%, #555 45%, #555 55%, #f0f0f0 55%); }
.pane.four { background: linear-gradient(90deg, transparent 46%, #555 46%, #555 54%, transparent 54%), linear-gradient(#f0f0f0 44%, #555 44%, #555 56%, #f0f0f0 56%); }
.subsep { width: 1px; height: 18px; background: #bbb; flex: none; }
.s2 { margin-left: 323px; }
.pageic { margin-left: 0; }
.pagename { margin-left: 7px; width: 160px; font-size: 10px; }
.subright { color: #aaa; font: 11px "DejaVu Sans", sans-serif; letter-spacing: -2px; }
.canvasarea { height: 532px; flex: none; background: #c9c9c9; padding: 18px 0 0 25px; }
.artboard { position: relative; width: 662px; height: 498px; display: flex; flex-direction: column; }
.white { height: 456px; background: #fff; display: flex; justify-content: center; padding: 217px 0 0 26px; }
.headline { color: #e05a5e; font-size: 24px; line-height: 36px; white-space: nowrap; }
.headline b { font-family: "Liberation Sans", sans-serif; font-weight: 700; color: #dd4a50; }
.band { position: relative; height: 42px; background: #7a99fa; border: 1px solid #5f88ee; display: flex; align-items: center; justify-content: center; color: #fff; }
.sig { position: absolute; left: 8px; top: 10px; font: 16px/20px "Liberation Serif", "Noto Sans CJK SC", serif; color: #ccd6fb; }
.bandtitle { font-size: 22px; font-weight: 500; letter-spacing: 3px; line-height: 34px; padding-left: 3px; margin-bottom: 5px; }
.hd { position: absolute; width: 5px; height: 5px; background: #fff; border: 1px solid #4a86e8; }
.tl { left: -3px; top: -3px; }
.tr { right: -3px; top: -3px; }
.bl { left: -3px; bottom: -3px; }
.br2 { right: -3px; bottom: -3px; }
.arrows { position: absolute; left: 0; top: 0; width: 662px; height: 498px; overflow: visible; }
.statusbar { height: 19px; flex: none; background: #d8d8d8; display: flex; align-items: center; font: 10px "Liberation Sans", sans-serif; color: #444; padding-left: 4px; }
.gif { width: 458px; color: #aaa; font-size: 9px; font-family: "Noto Sans CJK SC", sans-serif; }
.play { display: flex; width: 136px; color: #aaa; font-size: 9px; align-items: center; font-family: "DejaVu Sans", sans-serif; white-space: nowrap; }
.play > * { width: 19px; text-align: center; }
.play em { color: #333; font-size: 10px; width: 26px; font-family: "Liberation Sans", sans-serif; }
.dim { width: 62px; height: 19px; background: #e2e2e2; line-height: 19px; text-align: center; font-size: 10px; border-left: 1px solid #ccc; }
.zoompct { flex: 1; height: 19px; line-height: 19px; padding-left: 6px; margin-left: 2px; margin-right: 5px; background: #e2e2e2; display: flex; align-items: center; gap: 12px; }
.proptabs { height: 14px; flex: none; background: linear-gradient(#8e8e8e, #7b7b7b); display: flex; border-top: 1px solid #555; }
.ptab { width: 36px; background: #d8d8d8; font-size: 11px; line-height: 13px; padding-left: 3px; white-space: nowrap; }
.ptab:not(.on) { width: 48px; background: #a8a8a8; color: #555; padding-left: 5px; border-right: 1px solid #888; margin-left: 1px; font-size: 10px; }
.menuic { margin-left: auto; margin-right: 4px; font: 8px/13px "DejaVu Sans", sans-serif; color: #ddd; }

/* properties */
.props { flex: 1; min-height: 0; background: #d8d8d8; display: flex; border-bottom: 5px solid #d0d0d0; box-shadow: inset 0 1px 0 #bbb; }
.inp { display: block; height: 16px; background: #fff; border: 1px solid #9a9a9a; font: 10px/14px "Liberation Sans", sans-serif; padding-left: 2px; color: #333; flex: none; }
.inp.off { background: #d0d0d0; color: #aaa; border-color: #bcbcbc; }
.sel { display: flex; align-items: center; position: relative; height: 16px; background: #e0e0e0; padding-left: 3px; font-size: 11px; flex: none; white-space: nowrap; color: #333; }
.sel::after { content: ""; position: absolute; right: 5px; top: 4px; width: 5px; height: 5px; border: solid #888; border-width: 0 1px 1px 0; transform: rotate(45deg); }
.sel.off { background: #d0d0d0; color: #aaa; }
.mono { font: 700 9px "Liberation Mono", monospace; }
.sp { width: 10px; height: 16px; background: #cfcfcf; position: relative; flex: none; }
.sp::after { content: ""; position: absolute; left: 2px; top: 4px; width: 5px; height: 5px; border: solid #aaa; border-width: 0 1px 1px 0; transform: rotate(45deg); }
.sp.on { background: #e0e0e0; }
.sp.on::after { border-color: #666; }
.w23 { width: 23px; } .w22 { width: 22px; } .w26 { width: 26px; } .w28 { width: 28px; } .w30 { width: 30px; }
.w57 { width: 57px; height: 15px; font: 11px/13px "Noto Sans CJK SC", sans-serif; }
.w66 { width: 66px; } .w67 { width: 67px; } .w78 { width: 78px; } .w85 { width: 85px; } .w92 { width: 92px; }
.w104 { width: 104px; } .w114 { width: 114px; } .w135 { width: 135px; }
.p-a { width: 102px; flex: none; border-right: 1px solid #c4c4c4; padding-top: 9px; }
.p-a-top { display: flex; gap: 4px; padding-left: 6px; height: 33px; border-bottom: 1px solid #bdbdbd; }
.thumb { width: 32px; height: 28px; background: repeating-conic-gradient(#e4e4e4 0 25%, #fff 0 50%) 0 0 / 12px 12px; position: relative; border: 1px solid #ccc; }
.thumb i { position: absolute; left: 2px; right: 2px; bottom: 6px; height: 2px; background: #2d4fc4; }
.namecol { display: flex; flex-direction: column; line-height: 13px; margin-top: -1px; }
.sizegrid { display: flex; align-items: center; margin-top: 2px; }
.link { width: 5px; height: 5px; border: 1px solid #888; margin: 0 3px 0 7px; }
.sizerows { display: flex; flex-direction: column; gap: 3px; }
.srow { display: flex; align-items: center; }
.srow label { width: 12px; font: 9px "Liberation Sans", sans-serif; flex: none; padding-left: 2px; }
.srow label.big { width: 15px; font: 12px "Noto Sans CJK SC", sans-serif; padding-left: 0; white-space: nowrap; }
.p-b { width: 152px; flex: none; padding: 5px 0 0 5px; border-right: 1px solid #c4c4c4; }
.prow { height: 19px; display: flex; align-items: center; gap: 2px; white-space: nowrap; }
.mr3 { margin-right: 1px; }
.mr6 { margin-right: 2px; }
.mr2 { margin-right: 0; }
.swatch { width: 17px; height: 15px; background: #1544f0; margin-right: 4px; border: 1px solid #999; }
.swatch2 { width: 16px; height: 16px; margin-right: 3px; }
.lab { font-size: 11px; color: #333; flex: none; }
.l43 { width: 37px; text-align: right; }
.chk { width: 9px; height: 9px; background: #f2f2f2; margin-left: 41px; }
.dim-t { color: #aaa; font-size: 11px; }
.gbtn { width: 20px; height: 15px; background: linear-gradient(90deg, #aaa, #eee, #aaa); border: 1px solid #999; margin-left: 52px; }
.p-c { width: 170px; flex: none; padding: 5px 0 0 6px; border-right: 1px solid #c4c4c4; }
.tri3 { display: flex; background: #f0f0f0; flex: none; }
.tri3 svg { width: 20px; height: 16px; }
.tri3 .sel3 { background: #a8a8a8; }
.edge { margin-left: 9px; }
.whitebox { width: 19px; height: 17px; background: #fff; margin-left: 3px; }
.lab2 { margin-left: 14px; margin-right: 4px; }
.endrow { padding-left: 68px; gap: 3px; }
.endrow .w28 { margin-left: -1px; }
.p-d { width: 158px; flex: none; padding: 5px 0 0 4px; border-right: 1px solid #c4c4c4; }
.rowf { gap: 10px; }
.plus { width: 17px; height: 16px; background: #f8f8f8; border: 1px solid #999; font: 700 13px/13px "Liberation Sans", sans-serif; text-align: center; color: #111; }
.minus { color: #aaa; font-size: 11px; }
.filterlist { width: 123px; height: 37px; background: #fff; border: 1px solid #999; }
.p-e { flex: 1; padding: 7px 0 0 15px; display: flex; flex-direction: column; }
.bgroup { display: flex; width: 94px; height: 16px; border: 1px solid #999; flex: none; }
.bgroup span { width: 19px; background: #f0f0f0; border-right: 1px solid #999; display: flex; align-items: center; justify-content: center; }
.bgroup span.on { background: #bcbcbc; }
.bgroup svg { width: 13px; height: 13px; }
.groupbtn { width: 57px; height: 16px; margin: 3px 0 3px 19px; background: #cdcdcd; color: #aaa; text-align: center; line-height: 16px; flex: none; font-size: 10px; }
.styleicons { display: flex; gap: 14px; padding-left: 3px; margin-top: 5px; }
.faint { opacity: .35; }

/* side */
.side { flex: 1; min-width: 0; margin-right: 4px; background: #d8d8d8; display: flex; flex-direction: column; border-left: 1px solid #5a5a5a; border-right: 1px solid #777; }
.sidehead { height: 10px; flex: none; background: #4c4c4c; color: #ccc; font: 7px/10px "DejaVu Sans", sans-serif; text-align: right; padding-right: 3px; letter-spacing: -1px; }
.ptabs { height: 14px; flex: none; background: linear-gradient(#8e8e8e, #7a7a7a); display: flex; font-size: 10px; line-height: 14px; color: #444; }
.ptabs > span { padding: 0 4px; border-right: 1px solid #888; white-space: nowrap; background: #a4a4a4; }
.ptabs > span.on { background: #d8d8d8; }
.alignp { height: 201px; flex: none; padding: 5px 0 0 10px; }
.relrow { display: flex; justify-content: flex-end; align-items: center; gap: 7px; width: 157px; font-size: 10px; height: 17px; }
.relic { width: 19px; height: 16px; }
.alab { font-size: 10px; line-height: 14px; color: #444; }
.alignp > .alab { margin-top: 4px; }
.airow { display: flex; align-items: center; gap: 11px; margin: 5px 0 0 -3px; height: 16px; }
.airow i { width: 0; margin-left: -4px; }
.alignp > .airow + .alab { margin-top: 7px; }
.alower { display: flex; margin-top: 5px; }
.amatch { width: 78px; padding-top: 2px; }
.aspace { width: 80px; height: 67px; background: #e5e5e5; border-radius: 5px; padding: 3px 6px; }
.spic { display: flex; gap: 8px; padding-left: 2px; margin: 8px 0 2px; }
.eqsel { display: flex; height: 17px; width: 68px; border: 1px solid #888; background: #fff; line-height: 15px; padding-left: 2px; }
.eqsel span { flex: 1; }
.eqsel b { width: 13px; background: #ccc; position: relative; border-left: 1px solid #999; }
.eqsel b::after { content: ""; position: absolute; left: 3px; top: 5px; border: 3px solid transparent; border-top: 4px solid #555; border-bottom: 0; }
.darkline { height: 3px; flex: none; background: #333; }
.darkline.thin { height: 2px; }
.layersp { height: 197px; flex: none; display: flex; flex-direction: column; }
.lhead { display: flex; align-items: center; gap: 3px; height: 23px; padding-left: 3px; flex: none; }
.lopac { margin: 0 2px; font-size: 10px; white-space: nowrap; }
.llist { height: 155px; margin-left: 1px; width: 215px; border: 1px solid #aaa; background: #ededed; flex: none; }
.lrow { height: 20px; display: flex; align-items: center; border-bottom: 1px solid #8a8a8a; background: #ededed; }
.webl { background: #dad6ca; }
.sel2 { background: #cfe0f3; }
.lc { width: 17px; height: 19px; border-right: 2px solid #aaa; flex: none; display: flex; align-items: center; justify-content: center; background: #f2f2f2; }
.eyec svg { width: 12px; height: 10px; }
.lname { flex: 1; display: flex; align-items: center; padding-left: 3px; gap: 4px; font-size: 10px; }
.lname small { font: 9px "Liberation Serif", serif; }
.ltri { width: 0; height: 0; border: 4px solid transparent; border-left: 6px solid #6a7a8a; border-right: 0; margin: 0 2px 0 0; }
.ltri.down { border: 4px solid transparent; border-top: 6px solid #8a8470; border-bottom: 0; margin: 0 2px 0 0; }
.fold { width: 15px; height: 12px; margin-right: 1px; }
.lmove { color: #aaa; font: 9px "DejaVu Sans", sans-serif; margin-right: 4px; }
.radio { width: 15px; height: 19px; border-left: 1px solid #999; flex: none; position: relative; background: #ececec; }
.radio::after { content: ""; position: absolute; left: 3px; top: 5px; width: 9px; height: 9px; border-radius: 50%; border: 1px solid #999; background: #f6f6f6; }
.radio.on::before { content: ""; position: absolute; z-index: 1; left: 5px; top: 7px; width: 5px; height: 5px; border-radius: 50%; background: #222; }
.lfoot { flex: 1; display: flex; align-items: center; padding-left: 29px; font-size: 10px; }
.lfoot > span { width: 86px; }
.lfic { display: flex; gap: 5px; }
.stylesp { height: 195px; flex: none; }
.shead { display: flex; align-items: center; gap: 5px; padding: 2px 0 0 7px; height: 26px; }
.slist { position: relative; margin-left: 1px; height: 169px; width: 222px; background: #fff; border: 1px solid #bbb; }
.sbar { position: absolute; right: 0; top: 0; bottom: 0; width: 15px; background: #f0f0f0; color: #aaa; text-align: center; font: 10px/14px "DejaVu Sans", sans-serif; }
.low { height: 18px; background: #858585; line-height: 18px; }
.low > span.on { background: #ddd; }
.blanktab { width: 60px; }
.low2 { height: 16px; line-height: 16px; }
.low2 > span { padding: 0 4px; }
.sidefoot { flex: 1; background: #d0d0d0; }

/* watermark */
.wm-blob { position: absolute; left: 767px; top: 655px; width: 233px; height: 53px; background: #fff; border-radius: 24px 0 0 16px; }
.wm-text { position: absolute; left: 796px; top: 703px; font: 19px/24px "Liberation Sans", sans-serif; color: #fff; letter-spacing: 1.200px; white-space: nowrap; }
```
